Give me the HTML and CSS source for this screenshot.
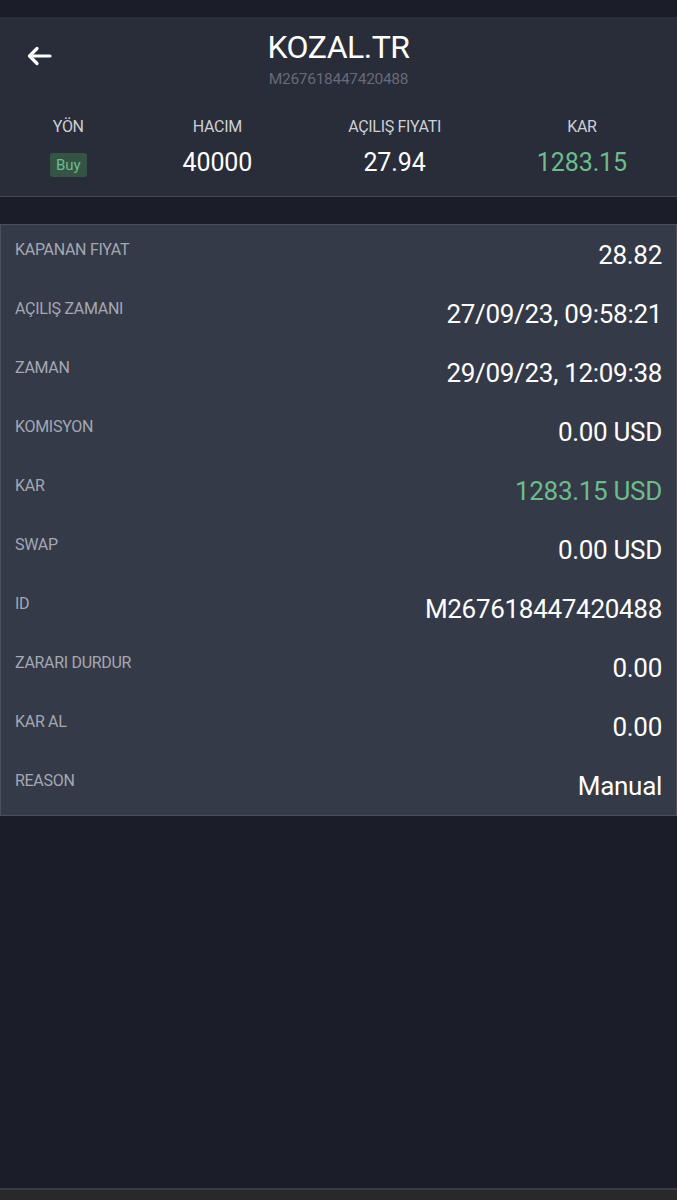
FILE: index.html
```html
<!DOCTYPE html>
<html lang="tr">
<head>
<meta charset="utf-8">
<title>KOZAL.TR</title>
<link rel="stylesheet" href="styles.css">
</head>
<body>
<div class="app">
  <div class="topstrip"></div>
  <header class="header">
    <div class="titlebar">
      <button class="back" aria-label="Geri">
        <svg width="28" height="22" viewBox="0 0 28 22"><path d="M25 11H5M12 3.5L4.5 11L12 18.5" fill="none" stroke="#ffffff" stroke-width="3.2" stroke-linecap="round" stroke-linejoin="round"/></svg>
      </button>
      <div class="titles">
        <div class="symbol">KOZAL.TR</div>
        <div class="orderid">M267618447420488</div>
      </div>
    </div>
    <div class="stats">
      <div class="stat"><div class="stat-label">YÖN</div><div class="badge">Buy</div></div>
      <div class="stat"><div class="stat-label">HACIM</div><div class="stat-value">40000</div></div>
      <div class="stat"><div class="stat-label">AÇILIŞ FIYATI</div><div class="stat-value">27.94</div></div>
      <div class="stat"><div class="stat-label">KAR</div><div class="stat-value green">1283.15</div></div>
    </div>
  </header>
  <section class="card">
    <div class="row"><div class="label">KAPANAN FIYAT</div><div class="value">28.82</div></div>
    <div class="row"><div class="label">AÇILIŞ ZAMANI</div><div class="value">27/09/23, 09:58:21</div></div>
    <div class="row"><div class="label">ZAMAN</div><div class="value">29/09/23, 12:09:38</div></div>
    <div class="row"><div class="label">KOMISYON</div><div class="value">0.00 USD</div></div>
    <div class="row"><div class="label">KAR</div><div class="value green">1283.15 USD</div></div>
    <div class="row"><div class="label">SWAP</div><div class="value">0.00 USD</div></div>
    <div class="row"><div class="label">ID</div><div class="value">M267618447420488</div></div>
    <div class="row"><div class="label">ZARARI DURDUR</div><div class="value">0.00</div></div>
    <div class="row"><div class="label">KAR AL</div><div class="value">0.00</div></div>
    <div class="row"><div class="label">REASON</div><div class="value">Manual</div></div>
  </section>
  <div class="filler"></div>
  <div class="bottombar"></div>
</div>
</body>
</html>
```

FILE: styles.css
```css
* { box-sizing: border-box; }
html, body {
  margin: 0;
  padding: 0;
  background: #1b1e29;
}
body {
  font-family: Roboto, "Noto Sans", "Liberation Sans", sans-serif;
  color: #ffffff;
}
.app {
  width: 677px;
  height: 1200px;
  display: flex;
  flex-direction: column;
  background: #1b1e29;
}
.topstrip {
  height: 17px;
  flex: none;
}
.header {
  flex: none;
  height: 180px;
  background: #292c39;
  border-bottom: 1px solid #454a58;
}
.titlebar {
  position: relative;
  height: 100px;
  display: flex;
  justify-content: center;
}
.back {
  position: absolute;
  left: 24px;
  top: 28px;
  padding: 0;
  border: 0;
  background: none;
  width: 30px;
  height: 24px;
}
.titles {
  display: flex;
  flex-direction: column;
  align-items: center;
  padding-top: 11px;
}
.symbol {
  font-size: 32px;
  line-height: 38px;
  letter-spacing: -0.5px;
}
.orderid {
  margin-top: 3px;
  font-size: 15.5px;
  line-height: 20px;
  color: #666a78;
  letter-spacing: -0.3px;
}
.stats {
  display: flex;
  justify-content: space-around;
  padding: 0 2px;
}
.stat {
  display: flex;
  flex-direction: column;
  align-items: center;
}
.stat-label {
  font-size: 16px;
  line-height: 20px;
  color: #cdd0d6;
  letter-spacing: -0.3px;
}
.stat-value {
  margin-top: 11px;
  font-size: 25px;
  line-height: 30px;
  letter-spacing: -0.1px;
}
.badge {
  margin-top: 16px;
  background: #355446;
  color: #6fbb8c;
  font-size: 15px;
  line-height: 24px;
  padding: 0 6px;
  border-radius: 3px;
}
.green { color: #6dbc8b; }
.card {
  flex: none;
  margin-top: 27px;
  background: #353a48;
  border: 1px solid #4b5060;
  padding: 10px 14px 0 14px;
  height: 592px;
}
.row {
  height: 59px;
  display: flex;
  justify-content: space-between;
  align-items: flex-start;
}
.label {
  font-size: 16px;
  line-height: 30px;
  color: #a4a8b3;
  letter-spacing: -0.3px;
}
.value {
  font-size: 26px;
  line-height: 40px;
  letter-spacing: -0.3px;
}
.filler {
  flex: 1;
}
.bottombar {
  flex: none;
  height: 12px;
  background: #29292b;
  border-top: 2px solid #3a3b40;
}
```
